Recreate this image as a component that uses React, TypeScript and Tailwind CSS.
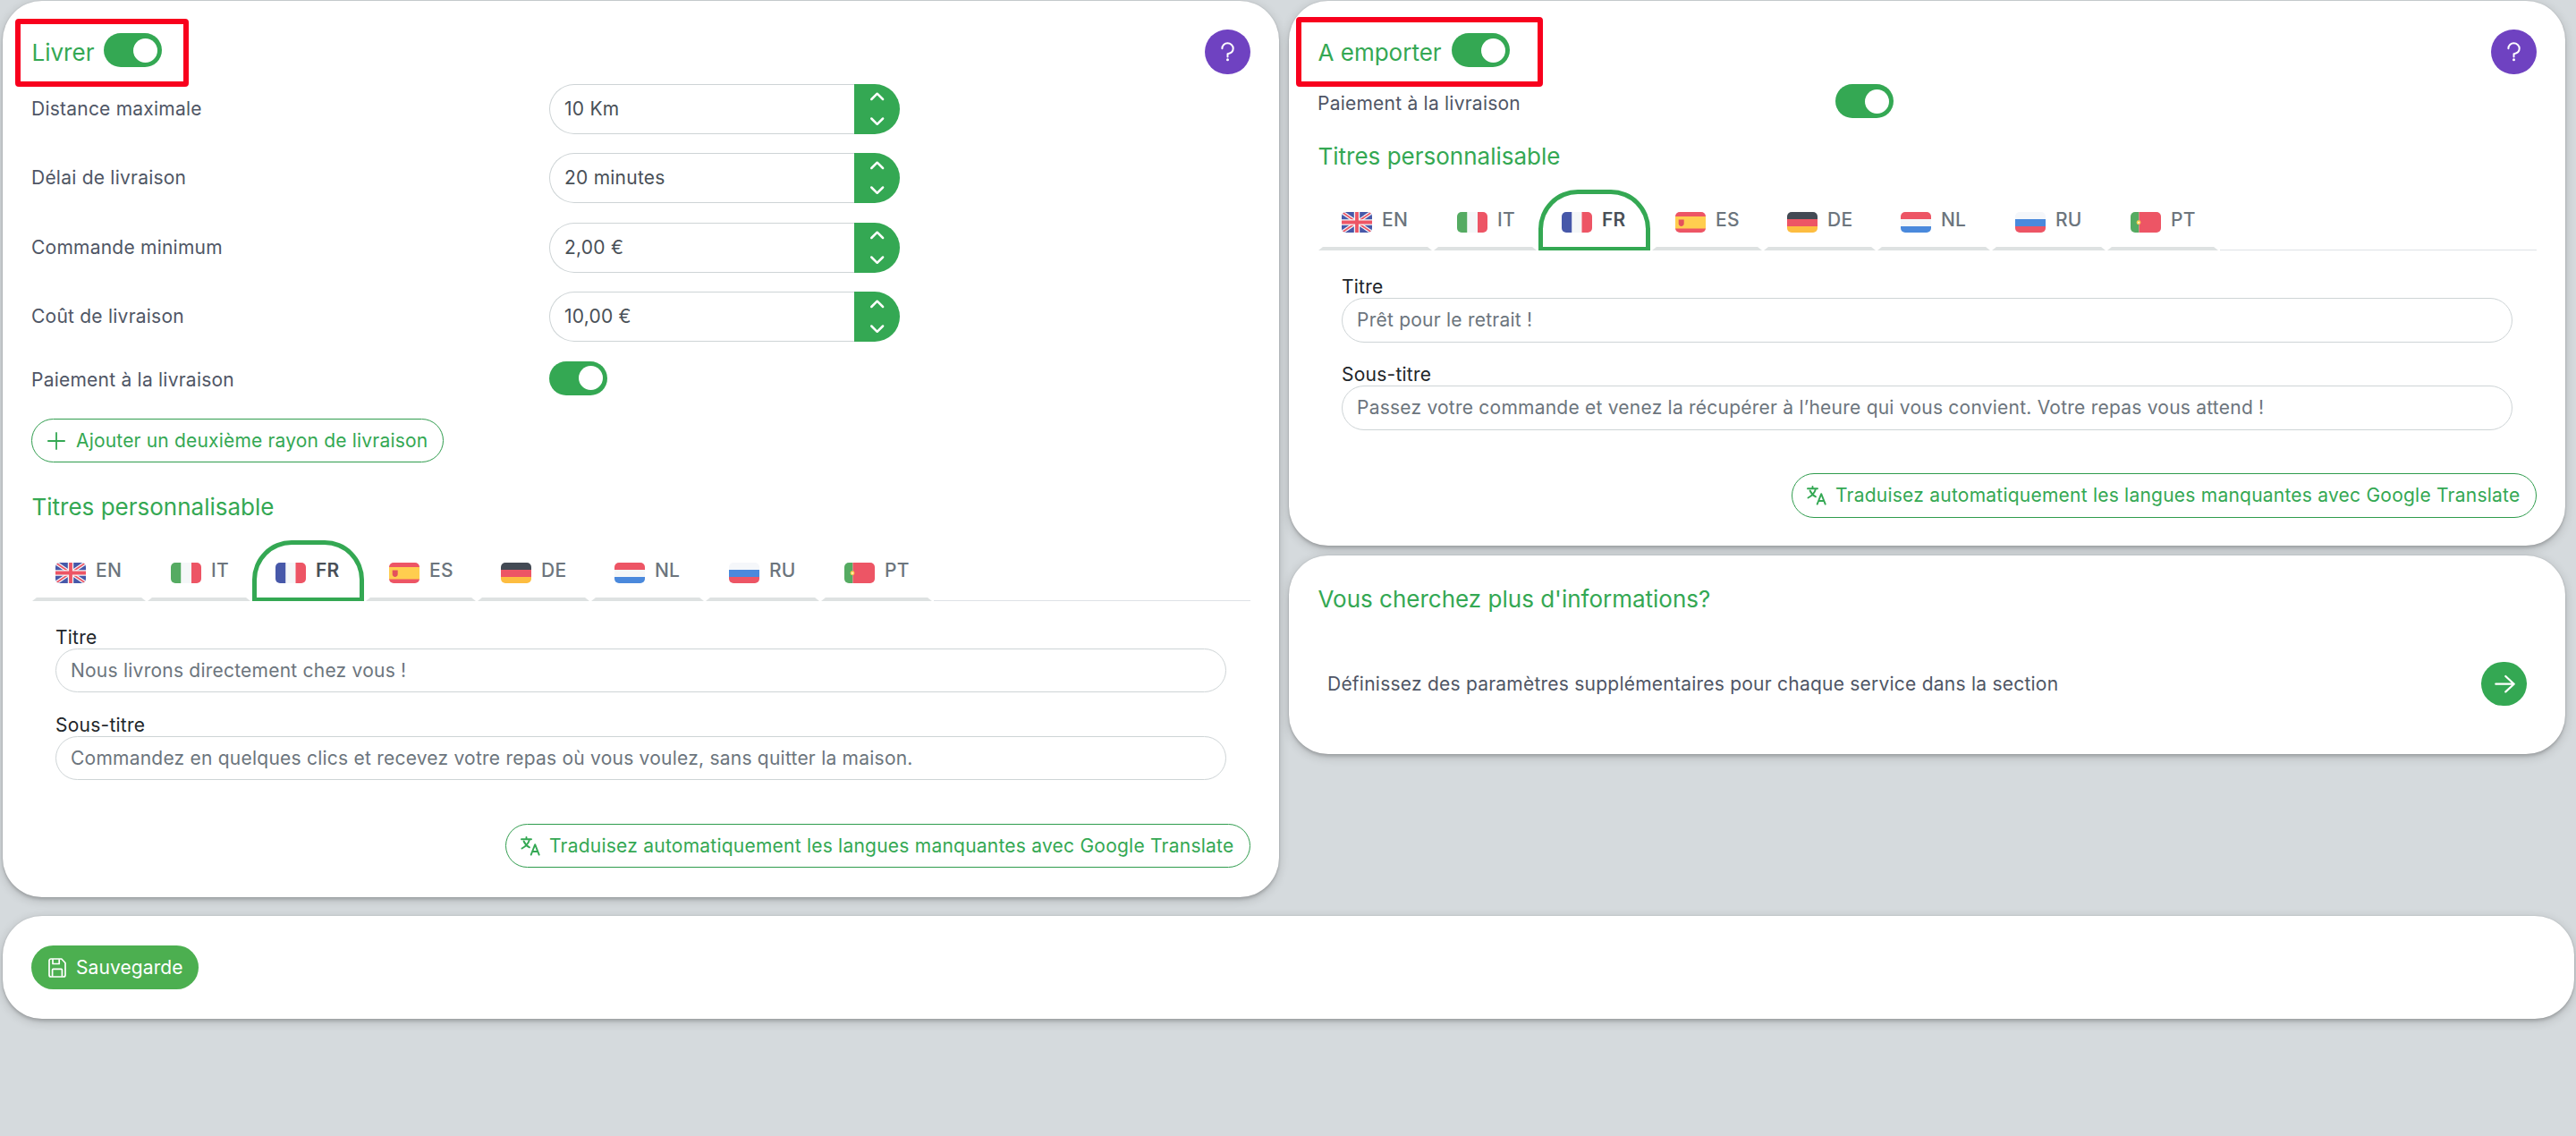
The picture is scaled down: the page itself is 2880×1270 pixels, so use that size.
import type { ReactNode } from "react";

function Toggle({ className = "" }: { className?: string }) {
  return (
    <span className={`flex h-[38px] w-[65px] shrink-0 items-center justify-end rounded-full bg-[#34a853] pr-[5px] ${className}`}>
      <span className="size-[27px] rounded-full bg-white" />
    </span>
  );
}

function HelpButton() {
  return (
    <button className="mt-8 ml-auto h-[50px] w-[51px] rounded-full bg-[#6f42c1]">
      <svg viewBox="0 0 51 50" fill="none" className="h-[50px] w-[51px]">
        <path d="M19.4 21.2c0-3.4 2.7-6 6-6s6.3 2.6 6.3 6c0 3.6-2.8 5.4-6.2 6v3.4" stroke="#fff" strokeWidth="2" strokeLinecap="round" strokeLinejoin="round" />
        <circle cx="25.5" cy="33.8" r="1.5" fill="#fff" />
      </svg>
    </button>
  );
}

const flags: Record<string, ReactNode> = {
  EN: (
    <>
      <path fill="#4758a9" d="M0 0h34v23H0z" />
      <path d="M0 0l34 23M34 0L0 23" stroke="#f5f7f8" strokeWidth="4.2" />
      <path d="M0 0l34 23M34 0L0 23" stroke="#ed5565" strokeWidth="1.8" />
      <path d="M17 0v23M0 11.5h34" stroke="#f5f7f8" strokeWidth="6.4" />
      <path d="M17 0v23M0 11.5h34" stroke="#ed5565" strokeWidth="3.8" />
    </>
  ),
  IT: (
    <>
      <path fill="#55ab62" d="M0 0h11.5v23H0z" />
      <path fill="#f5f7f8" d="M11.5 0h11.5v23H11.5z" />
      <path fill="#ed5565" d="M23 0h11v23H23z" />
    </>
  ),
  FR: (
    <>
      <path fill="#4758a9" d="M0 0h11.5v23H0z" />
      <path fill="#f5f7f8" d="M11.5 0h11v23h-11z" />
      <path fill="#ed5565" d="M22.5 0H34v23H22.5z" />
    </>
  ),
  ES: (
    <>
      <path fill="#ed5565" d="M0 0h34v23H0z" />
      <path fill="#ffce4f" d="M0 5h34v13.5H0z" />
      <path fill="#e4515c" d="M3.7 8.5h6v4.5c0 1.8-1.3 2.9-3 2.9s-3-1.1-3-2.9z" />
    </>
  ),
  DE: (
    <>
      <path fill="#434a54" d="M0 0h34v8H0z" />
      <path fill="#ed5565" d="M0 8h34v8H0z" />
      <path fill="#fdbd40" d="M0 16h34v7H0z" />
    </>
  ),
  NL: (
    <>
      <path fill="#ed5565" d="M0 0h34v8H0z" />
      <path fill="#f5f7f8" d="M0 8h34v8H0z" />
      <path fill="#4a89dc" d="M0 16h34v7H0z" />
    </>
  ),
  RU: (
    <>
      <path fill="#f5f7fa" d="M0 0h34v8H0z" />
      <path fill="#4a89dc" d="M0 8h34v8H0z" />
      <path fill="#ed5565" d="M0 16h34v7H0z" />
    </>
  ),
  PT: (
    <>
      <path fill="#55ab62" d="M0 0h9.5v23H0z" />
      <path fill="#ed5565" d="M9.5 0H34v23H9.5z" />
      <circle cx="9" cy="11.7" r="2.4" fill="#ffce4f" />
      <circle cx="9" cy="11.7" r="1" fill="#fff3d0" />
    </>
  ),
};

const tabs = [
  { code: "EN", width: "w-[127px]" },
  { code: "IT", width: "w-[115px]" },
  { code: "FR", width: "w-[125px]" },
  { code: "ES", width: "w-[123px]" },
  { code: "DE", width: "w-[125px]" },
  { code: "NL", width: "w-[126px]" },
  { code: "RU", width: "w-[127px]" },
  { code: "PT", width: "w-[124px]" },
];

function LanguageTabs() {
  return (
    <div className="mt-5 flex h-[68px] gap-[2px] pl-px">
      {tabs.map(({ code, width }) => {
        const active = code === "FR";
        return (
          <div
            key={code}
            className={`flex shrink-0 pl-[21px] ${width} ${
              active
                ? "rounded-t-[44px] border-[5px] border-b-4 border-[#34a853] text-[#495057]"
                : "border-[5px] border-b-4 border-transparent border-b-[#dee2e2] text-[#6c757d]"
            }`}
          >
            <svg viewBox="0 0 34 23" className="mt-5 h-[23px] w-[34px] shrink-0 rounded-[5px]">
              {flags[code]}
            </svg>
            <span className={`ml-[11px] pt-[15px] leading-7 ${active ? "font-semibold" : "font-medium"}`}>{code}</span>
          </div>
        );
      })}
      <div className="flex-1 border-b border-[#dee2e6]" />
    </div>
  );
}

function TextField({ label, value }: { label: string; value: string }) {
  return (
    <label className="flex flex-col">
      <span className="h-[25px] leading-[25px] text-[#212529]">{label}</span>
      <span className="flex h-[49.5px] items-center rounded-full border border-[#ced4d6] pl-4 text-[#6c757d]">{value}</span>
    </label>
  );
}

function TranslateButton() {
  return (
    <button className="mt-[48.5px] ml-auto flex h-[49.5px] w-[833px] items-center rounded-full border border-[#2f9c4d] pl-4 text-[#34a853]">
      <svg viewBox="0 0 22 22" fill="none" stroke="currentColor" strokeWidth="1.9" strokeLinecap="round" strokeLinejoin="round" className="mr-[10px] size-[22px] shrink-0">
        <path d="M1 3.2h11M6.5 1v2.2M10 3.4C9 7.4 5.5 11.3 1.5 13.5M3.6 5.5c1.3 3 3.7 5.4 6.4 6.8" />
        <path d="M11.7 20.6L16.2 9.2l4.5 11.4M13.2 17h6" />
      </svg>
      <span className="whitespace-nowrap">Traduisez automatiquement les langues manquantes avec Google Translate</span>
    </button>
  );
}

function CustomTitles({ title, subtitle }: { title: string; subtitle: string }) {
  return (
    <>
      <LanguageTabs />
      <div className="mt-7 flex flex-col gap-[23.5px] px-[27px]">
        <TextField label="Titre" value={title} />
        <TextField label="Sous-titre" value={subtitle} />
      </div>
      <TranslateButton />
    </>
  );
}

function NumberField({ label, value }: { label: string; value: string }) {
  return (
    <div className="flex h-14 items-center">
      <span className="w-[579px] text-[#4f5665]">{label}</span>
      <span className="flex h-14 w-[341px] items-center rounded-l-full border border-r-0 border-[#ced4d6] pl-4 text-[#495057]">{value}</span>
      <span className="h-14 w-[51px] rounded-r-full bg-[#34a853]">
        <svg viewBox="0 0 51 56" fill="none" stroke="#fff" strokeWidth="2.5" strokeLinecap="round" strokeLinejoin="round" className="h-14 w-[51px]">
          <path d="M19.3 17l6.4-6.3 6.4 6.3M19.3 38.5l6.4 6.3 6.4-6.3" />
        </svg>
      </span>
    </div>
  );
}

function PaymentRow() {
  return (
    <div className="flex h-[38px]">
      <span className="w-[579px] pt-[2.5px] leading-[38px] text-[#4f5665]">Paiement à la livraison</span>
      <Toggle />
    </div>
  );
}

function Card({ className = "", children }: { className?: string; children: ReactNode }) {
  return (
    <section className={`flex flex-col rounded-[44px] bg-white px-8 shadow-[0_3px_3px_rgba(0,0,0,0.12),0_3px_12px_rgba(0,0,0,0.18),0_0_2px_rgba(0,0,0,0.12)] ${className}`}>
      {children}
    </section>
  );
}

const heading = "pl-[0.5px] text-[26px] leading-[34px] tracking-normal text-[#34a853]";

function CardHeader({ title, frame }: { title: string; frame: string }) {
  return (
    <header className="relative -mx-8 flex h-[93px] shrink-0 items-start px-8">
      <h2 className={`mt-[41px] ${heading}`}>{title}</h2>
      <Toggle className="mt-9 ml-[11px]" />
      <HelpButton />
      <div className={`absolute rounded-[4px] border-[6px] border-[#f8001d] ${frame}`} />
    </header>
  );
}

export default function App() {
  return (
    <main className="h-[1270px] w-[2880px] overflow-hidden bg-[#d5dadd] pt-px pr-[2px] pl-[3px] font-['Inter',sans-serif] text-[21px] leading-7 tracking-[0.23px]">
      <div className="flex items-start gap-[11px]">
        <Card className="h-[1002px] w-[1427px]">
          <CardHeader title="Livrer" frame="left-[14px] top-5 h-[76px] w-[194px]" />
          <div className="flex flex-col gap-[21.4px]">
            <NumberField label="Distance maximale" value="10 Km" />
            <NumberField label="Délai de livraison" value="20 minutes" />
            <NumberField label="Commande minimum" value="2,00 €" />
            <NumberField label="Coût de livraison" value="10,00 €" />
          </div>
          <div className="mt-[21.8px]">
            <PaymentRow />
          </div>
          <button className="mt-[26px] flex h-[49.5px] w-[461px] items-center rounded-full border border-[#2f9c4d] pl-[17px] text-[#34a853]">
            <svg viewBox="0 0 20 20" stroke="currentColor" strokeWidth="1.8" strokeLinecap="round" className="mr-3 size-5 shrink-0">
              <path d="M10 .9v18.2M.9 10h18.2" />
            </svg>
            <span className="whitespace-nowrap tracking-[0.18px]">Ajouter un deuxième rayon de livraison</span>
          </button>
          <h3 className={`mt-[32.5px] ${heading}`}>Titres personnalisable</h3>
          <CustomTitles
            title="Nous livrons directement chez vous !"
            subtitle="Commandez en quelques clics et recevez votre repas où vous voulez, sans quitter la maison."
          />
        </Card>

        <div className="flex w-[1427px] flex-col gap-[11px]">
          <Card className="h-[609px]">
            <CardHeader title="A emporter" frame="left-2 top-[18px] h-[78px] w-[276px]" />
            <PaymentRow />
            <h3 className={`mt-[26px] ${heading}`}>Titres personnalisable</h3>
            <CustomTitles
              title="Prêt pour le retrait !"
              subtitle="Passez votre commande et venez la récupérer à l’heure qui vous convient. Votre repas vous attend !"
            />
          </Card>
          <Card className="h-[222px]">
            <h3 className={`mt-8 ${heading}`}>Vous cherchez plus d'informations?</h3>
            <div className="mt-[53px] flex items-center justify-between px-[11px] text-[#4f5665]">
              <span>Définissez des paramètres supplémentaires pour chaque service dans la section</span>
              <button className="h-[49px] w-[51px] rounded-full bg-[#34a853]">
                <svg viewBox="0 0 51 49" fill="none" stroke="#fff" strokeWidth="2.2" strokeLinecap="round" strokeLinejoin="round" className="h-[49px] w-[51px]">
                  <path d="M16.3 24.7h20.4M27.3 16l9.4 8.7-9.4 8.7" />
                </svg>
              </button>
            </div>
          </Card>
        </div>
      </div>

      <Card className="mt-[21px] h-[115px] pt-[33px]">
        <button className="flex h-[49px] w-[187px] items-center rounded-full bg-[#4caf50] pl-[19px] text-white">
          <svg viewBox="0 0 20 22" fill="none" stroke="currentColor" strokeWidth="1.7" strokeLinejoin="round" className="mr-[11px] h-[22px] w-5 shrink-0">
            <path d="M3 1h11.8L19 5.5V19a2 2 0 0 1-2 2H3a2 2 0 0 1-2-2V3a2 2 0 0 1 2-2z" />
            <path d="M5 1.2V6.5h7.2V1.2M4.6 20.8V13.2a.8.8 0 0 1 .8-.8h9.200a.8.8 0 0 1 .8.8v7.6" />
          </svg>
          <span className="tracking-[0.1px]">Sauvegarde</span>
        </button>
      </Card>
    </main>
  );
}
